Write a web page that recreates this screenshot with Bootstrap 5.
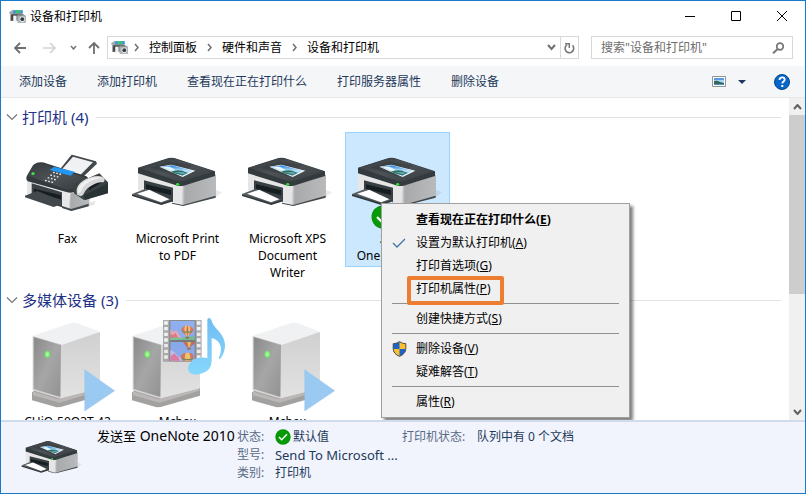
<!DOCTYPE html>
<html lang="zh-CN">
<head>
<meta charset="utf-8">
<meta name="viewport" content="width=device-width, initial-scale=1">
<title>设备和打印机</title>
<link href="https://cdn.jsdelivr.net/npm/bootstrap@5.3.0/dist/css/bootstrap.min.css" rel="stylesheet">
<style>
body{font:12px/17px "Noto Sans","Noto Sans CJK SC",sans-serif;color:#000;background:#fff}
svg{display:block;flex-shrink:0}
.btn{--bs-btn-font-size:12px;--bs-btn-line-height:17px;--bs-btn-padding-x:0;--bs-btn-padding-y:0;--bs-btn-border-width:0;--bs-btn-border-radius:0;--bs-btn-color:#000}
.win{border:1px solid #1979ca}
.titlebar{height:30px;padding-left:8px}
.titlebar h1{font-size:12px;line-height:17px}
.win-btn{width:46px;height:29px}
.addr-row{height:35px;padding:5px 12px 7px 13px}
.box{border:1px solid #d9d9d9}
.nav-recent{margin-left:14px}
.nav-up{margin-left:11px}
.crumbs{padding-left:3px;margin-left:7px}
.crumb-list{gap:9px;margin-left:5px}
.refresh{width:18px;border-left:1px solid #d9d9d9!important}
.search-box{width:202px;margin-left:12px;padding:0 7px 0 9px}
.search-box input{font-size:12px;line-height:17px;color:#6d6d6d;outline:0;min-width:0}
.search-box input::placeholder{color:#6d6d6d;opacity:1}
.cmdbar{height:32px;background:#f5f6f7;border-bottom:1px solid #e8e8e8;padding:0 15px 0 18px}
.cmds{gap:30px}
.cmds .btn{--bs-btn-color:#1e395b;--bs-btn-hover-color:#1e395b}
.content{min-height:0}
.pane{padding:3px 8px 0 5px}
.group-head{color:#1e3287;margin:5px 0 4px;gap:4px}
.group-head h2{font-size:15px;line-height:22px}
.group-rule{height:1px;background:#e2e2e2;margin-left:4px}
.tiles{gap:5px;padding-left:9px}
.tile{width:105px;padding-bottom:3px!important}
.tile svg{margin-bottom:2px}
.tile.picked{background:#cce8ff;outline:1px solid #99d1ff;outline-offset:-1px}
.default-mark{left:26px;top:73px}
.sbar{width:16px;background:#f0f0f0}
.sbar .btn{height:17px}
.thumb{height:62%;background:#cdcdcd}
.ctx{left:36px;top:71px;width:249px;background:#f0f0f0;border:1px solid #a0a0a0;padding:4px 2px;box-shadow:3px 3px 3px rgba(0,0,0,.5);z-index:5}
.ctx .btn{height:23px;padding-left:8px;gap:8px}
.ctx-ico{width:16px}
.ctx hr{margin:3px 8px;border-top:1px solid #919191;opacity:1}
.callout-frame{left:23px;top:-1px;width:97px;height:29px;border:4px solid #ed7d31;border-radius:2px;pointer-events:none}
.details{height:73px;background:#f1f4fc;border-top:2px solid #d0dceb;color:#1e395b;padding:2px 0 0 16px}
.details h3{font-size:14px;line-height:18px;color:#000;margin:3px 2px 0 10px}
.details h3 span{font-size:13px}
.latin{font-size:13px}
.props{display:grid;grid-template-columns:38px 127px;line-height:18px;margin:4px 0 0}
.props.wide{grid-template-columns:75px auto}
.props dt{font-weight:400;color:#5a6b86}
.state{gap:2px}
</style>
<script src="https://cdn.jsdelivr.net/npm/bootstrap@5.3.0/dist/js/bootstrap.bundle.min.js"></script>
</head>
<body>
<svg width="0" height="0" class="position-absolute" aria-hidden="true">
<defs>
<linearGradient id="gTop" x1="0" y1="0" x2="1" y2="1"><stop offset="0" stop-color="#353b3e"/><stop offset=".5" stop-color="#4c5255"/><stop offset="1" stop-color="#353b3e"/></linearGradient>
<linearGradient id="gSide" x1="0" y1="0" x2="1" y2="0"><stop offset="0" stop-color="#f1f1f1"/><stop offset=".12" stop-color="#a8a9ab"/><stop offset="1" stop-color="#b9babc"/></linearGradient>
<linearGradient id="gSky" x1="0" y1="0" x2="0" y2="1"><stop offset="0" stop-color="#1f7fe0"/><stop offset=".55" stop-color="#c4e8fa"/><stop offset="1" stop-color="#3f8fc8"/></linearGradient>
<linearGradient id="gFront" x1="0" y1="0" x2="1" y2="1"><stop offset="0" stop-color="#898989"/><stop offset=".5" stop-color="#a6a6a6"/><stop offset="1" stop-color="#929292"/></linearGradient>
<linearGradient id="gWhite" x1="0" y1="0" x2="0" y2="1"><stop offset="0" stop-color="#d0d0d0"/><stop offset="1" stop-color="#e2e2e2"/></linearGradient>
<linearGradient id="gNote" x1="0" y1="0" x2="0" y2="1"><stop offset="0" stop-color="#6fbdf2"/><stop offset="1" stop-color="#86d7fc"/></linearGradient>
<radialGradient id="gLed"><stop offset="0" stop-color="#c5ffb5"/><stop offset="1" stop-color="#62dd5d"/></radialGradient>
</defs>
<symbol id="printer" viewBox="375 6 315 288">
<path d="M552 226l96-25 18-14-20-8z" fill="#888" opacity=".18"/>
<path d="M414 126v54l18 8 112 36 8 3 96-28V132z" fill="#e6e6e7"/>
<path d="M549 165q50-10 99-31v65l-96 28-10-3z" fill="url(#gSide)"/>
<path d="M516 218l33 7 98-28v6l-98 25-33-7z" fill="#42484b"/>
<path d="M432 151l87 22v43l-87-29z" fill="#394044"/>
<path d="M438 163l75 18v14l-75-18z" fill="#171e22"/>
<path d="M396 192l41-16 78 33-31 14z" fill="#555b5e"/>
<path d="M396 192l88 28 31-11v6l-31 10-88-27z" fill="#30383c"/>
<path d="M411 191l37-12 60 29-25 9z" fill="#fff"/>
<path d="M414 113l92-29q9-2 17 0l122 40v14l-94 29q-9 2-18 0l-119-37z" fill="#343b3e"/>
<path d="M417 113l91-28q7-1 13 0l121 39-92 29q-9 2-17 0z" fill="url(#gTop)"/>
<path d="M452 113l57-18 70 10-47 34z" fill="#2c3336" opacity=".4"/>
<path d="M478 110l36-6 72 18-38 19z" fill="#f5f8fa"/>
<path d="M485 111l30-5 63 16-31 15z" fill="url(#gSky)"/>
<path d="M488 112q20-6 28 2 8 4 12 7-10 3-17 0z" fill="#e9f7fe"/>
<path d="M512 125q22-7 35-3l16 7-16 7-20-5z" fill="#2c7263"/>
<path d="M523 127l26-1 9 4-10 3z" fill="#66a4b6"/>
<ellipse cx="533" cy="163" rx="5" ry="4" fill="#35dd35"/>
</symbol>
<symbol id="fax" viewBox="45 6 315 288">
<path d="M212 243l70-18 5-12-25 5z" fill="#888" opacity=".2"/>
<path d="M81 145v48l105 39 28 10 51-15 8-37-88-18z" fill="#e7e7e8"/>
<path d="M212 190l56-10v46l-53 16-10-4z" fill="url(#gSide)"/>
<path d="M95 160l91 27v45l-91-31z" fill="#3b4145"/>
<path d="M102 176l81 20v12l-81-19z" fill="#171d20"/>
<path d="M75 197l36-14 73 28v12l-23 8-86-29z" fill="#42484b"/>
<path d="M186 228l28 9 52-16v8l-52 14-28-9z" fill="#42484b"/>
<path d="M178 120l36-45q2-1 5 0l69 19 3 7-49 47z" fill="#42484b"/>
<path d="M184 120l35-40 60 17-38 38z" fill="#eff1f2"/>
<path d="M80 139l19-33q4-5 12-8 15-3 31 3l117 38q10 7 6 14l-43 33q-10 4-20 1l-119-33q-6-5-3-15z" fill="#343b3e"/>
<path d="M84 137l18-30q8-7 25-5l132 42q3 5-4 9l-40 24q-10 4-20 0z" fill="url(#gTop)"/>
<path d="M149 120l13-10 62 15-12 12z" fill="#2196f3"/>
<g stroke="#eee" stroke-width="4" stroke-dasharray="5 5"><path d="M159 127l27 7M151 135l27 7M143 143l27 7M135 151l27 7"/></g>
<ellipse cx="99" cy="131" rx="5" ry="4" fill="#43e843"/>
<path d="M219 174q1-11 14-16l65-28 26 27v31l-72 22-30-20z" fill="#3a4144"/>
<path d="M253 196l71-36v30l-69 20z" fill="#293235"/>
<path d="M265 164l37-20 5 12-40 25z" fill="#151d20"/>
<path d="M231 194q-5-19 9-34 14-15 43-21 19-4 29 4 5 7-2 14-15-2-25 4-24 11-31 25-3 10-12 13z" fill="#d6d7d8"/>
<path d="M235 190q-5-17 8-28 19-17 43-20 17-2 20 3-23 1-39 12-17 9-22 23-2 9-10 10z" fill="#f0f0f0"/>
</symbol>
<symbol id="nas" viewBox="45 75 315 288">
<path d="M96 307l14-9 190-6v25l-118 34-12 1-74-21z" fill="#a3a1a0"/>
<path d="M99 304l77 24 122-36v10l-119 36-80-22z" fill="#bab7b6"/>
<path d="M98 139l110-38q10-4 20-2l66 24q6 2 6 7v164l-118 31-84-25z" fill="#ededee"/>
<path d="M185 165l115-39v168l-118 31z" fill="url(#gWhite)"/>
<path d="M98 138l110-37q10-4 20-2l70 25-114 40z" fill="#f0f1f2"/>
<path d="M98 138l88 26-4 162-84-25z" fill="#d4d4d4"/>
<path d="M101 141l82 24-2 156-80-24z" fill="url(#gFront)"/>
<ellipse cx="142" cy="193" rx="9" ry="11" fill="url(#gLed)"/>
</symbol>
<symbol id="play" viewBox="45 75 315 288">
<path d="M254 239l90 63-90 61z" fill="#9acaf2" stroke="#8abce6"/>
</symbol>
<symbol id="balloon" viewBox="0 0 40 42">
<path d="M13 29Q1 17 2 12 6 1 20 1q14 0 18 11 1 6-11 17z" fill="#d4614f"/>
<path d="M17 31Q7 13 14 1q6-1 12 0 7 12-3 30z" fill="#f2c15b"/><path d="M19 31q-4-17 0-30h3q3 13-1 30z" fill="#c8503f"/>
<path d="M3 15q17 7 34 0l-3 6q-14 5-28 0z" fill="#6c7b43"/><path d="M15 34h10v6H15z" fill="#93622f"/>
</symbol>
<symbol id="smallDev" viewBox="0 0 16 14">
<path d="M3 1h10v3H3z" fill="#3291e4"/><path d="M6 1h5v3H6z" fill="#3fc276"/>
<path d="M1 4h11l3 2v5H1z" fill="#777d81"/><path d="M0 3l3-2h2L3 4v7H1V5z" fill="#a7abad"/>
<path d="M3 6h4v6H3z" fill="#f2f2f2"/><path d="M2 5h6v1H4v5H2z" fill="#444"/>
<path d="M8 6h8v7H8z" fill="#acb2b6"/><path d="M9 5h3v1H9z" fill="#777"/>
<circle cx="12.5" cy="9.500" r="2.600" fill="#eee"/><circle cx="12.500" cy="9.500" r="1.800" fill="#343b40"/>
</symbol>
<symbol id="sep" viewBox="0 0 7 9"><path d="M2 1l3 3.500L2 8" fill="none" stroke="#707070" stroke-width="1.500"/></symbol>
<symbol id="okay" viewBox="0 0 24 24"><circle cx="12" cy="12" r="11.500" fill="#0b8f0b"/><circle cx="12" cy="12" r="10.500" fill="#069b06"/><path d="M6 12l4 4 8-8" fill="none" stroke="#fff" stroke-width="2.200"/></symbol>
<symbol id="groupChev" viewBox="0 0 12 12"><path d="M1 3.500l5 5 5-5" fill="none" stroke="#777" stroke-width="1.200"/></symbol>
</svg>

<div class="win vh-100 d-flex flex-column overflow-hidden">
<header class="titlebar d-flex align-items-center flex-shrink-0">
  <svg width="17" height="15"><use href="#smallDev"/></svg>
  <h1 class="m-0 ms-1 fw-normal flex-grow-1">设备和打印机</h1>
  <button class="btn win-btn d-flex align-items-center justify-content-center" aria-label="最小化"><svg width="10" height="10"><path d="M0 5.500h10" stroke="#000"/></svg></button>
  <button class="btn win-btn d-flex align-items-center justify-content-center" aria-label="最大化"><svg width="10" height="10"><path d="M.5.5h9v9h-9z" fill="none" stroke="#000"/></svg></button>
  <button class="btn win-btn d-flex align-items-center justify-content-center" aria-label="关闭"><svg width="10" height="10"><path d="M0 0l10 10M10 0L0 10" stroke="#000"/></svg></button>
</header>

<div class="addr-row d-flex align-items-stretch flex-shrink-0">
  <nav class="d-flex align-items-center" aria-label="导航">
    <button class="btn" aria-label="后退"><svg width="12" height="12"><path d="M12 6H1.500M6 1L1 6l5 5" fill="none" stroke="#6f6f6f" stroke-width="1.800"/></svg></button>
    <button class="btn ms-3" aria-label="前进"><svg width="14" height="12"><path d="M1 6h11M8 1l5 5-5 5" fill="none" stroke="#d3d3d3" stroke-width="1.600"/></svg></button>
    <button class="btn nav-recent" aria-label="最近位置"><svg width="7" height="6"><path d="M1 1l2.500 3L6 1" fill="none" stroke="#777" stroke-width="1.500"/></svg></button>
    <button class="btn nav-up" aria-label="向上"><svg width="12" height="12"><path d="M6 12V1.500M1 6l5-5 5 5" fill="none" stroke="#6f6f6f" stroke-width="1.800"/></svg></button>
  </nav>
  <div class="box crumbs d-flex align-items-center flex-grow-1">
    <svg width="17" height="15"><use href="#smallDev"/></svg>
    <nav class="crumb-list d-flex align-items-center flex-grow-1" aria-label="地址">
      <svg width="7" height="9"><use href="#sep"/></svg><a href="#" class="text-black text-decoration-none">控制面板</a>
      <svg width="7" height="9"><use href="#sep"/></svg><a href="#" class="text-black text-decoration-none">硬件和声音</a>
      <svg width="7" height="9"><use href="#sep"/></svg><a href="#" class="text-black text-decoration-none">设备和打印机</a>
    </nav>
    <button class="btn me-1" aria-label="展开地址"><svg width="9" height="7"><path d="M1 1l3.500 4L8 1" fill="none" stroke="#707070" stroke-width="2"/></svg></button>
    <button class="btn refresh align-self-stretch d-flex align-items-center justify-content-center" aria-label="刷新"><svg width="11" height="12"><path d="M3 2.800a4.300 4.300 0 1 0 5.500.6" fill="none" stroke="#777" stroke-width="1.600"/><path d="M1 1.700h4.300V6" fill="none" stroke="#777" stroke-width="1.500"/></svg></button>
  </div>
  <form class="box search-box d-flex align-items-center">
    <input class="border-0 p-0 flex-grow-1 bg-transparent" type="search" aria-label="搜索" placeholder='搜索"设备和打印机"'>
    <button type="button" class="btn" aria-label="搜索"><svg width="13" height="12"><circle cx="8" cy="4.500" r="3.300" fill="none" stroke="#777" stroke-width="1.700"/><path d="M5.700 7L1 11.300" stroke="#777" stroke-width="2"/></svg></button>
  </form>
</div>

<div class="cmdbar d-flex align-items-center justify-content-between flex-shrink-0">
  <div class="cmds d-flex">
    <button class="btn">添加设备</button><button class="btn">添加打印机</button><button class="btn">查看现在正在打印什么</button><button class="btn">打印服务器属性</button><button class="btn">删除设备</button>
  </div>
  <div class="d-flex align-items-center">
    <button class="btn" aria-label="更改视图"><svg width="14" height="11"><path d="M.5.5h13v10H.5z" fill="#fff" stroke="#8e9499"/><path d="M2 2h10v7H2z" fill="#a9d8f5"/><path d="M2 2h10v2H2z" fill="#5b98e4"/><path d="M2 5q4-1 6 1l4 1v1H2z" fill="#35665c"/><path d="M2 8h10v1H2z" fill="#4d8fc5"/></svg></button>
    <button class="btn ps-2 ms-1" aria-label="更多视图选项"><svg width="8" height="4"><path d="M0 0h8L4 4z" fill="#1e395b"/></svg></button>
    <button class="btn ps-4 ms-1" aria-label="帮助"><svg width="16" height="16"><circle cx="8" cy="8" r="7.500" fill="#0865ca" stroke="#064987"/><path d="M5.500 6q0-2.700 2.700-2.700 2.500 0 2.500 2.200 0 1.300-1.500 2.200-.9.600-.9 1.700" fill="none" stroke="#fff" stroke-width="1.800"/><path d="M7.300 11h2v2h-2z" fill="#fff"/></svg></button>
  </div>
</div>

<main class="content d-flex flex-grow-1 overflow-hidden">
  <div class="pane flex-grow-1">
    <section>
      <div class="group-head d-flex align-items-center"><svg width="12" height="12"><use href="#groupChev"/></svg><h2 class="m-0 fw-normal">打印机 (4)</h2><span class="group-rule flex-grow-1"></span></div>
      <div class="tiles d-flex align-items-start">
        <button class="btn tile"><svg width="105" height="96"><use href="#fax"/></svg>Fax</button>
        <button class="btn tile"><svg width="105" height="96"><use href="#printer"/></svg>Microsoft Print<br>to PDF</button>
        <button class="btn tile"><svg width="105" height="96"><use href="#printer"/></svg>Microsoft XPS<br>Document<br>Writer</button>
        <div class="position-relative">
          <button class="btn tile picked"><svg width="105" height="96"><use href="#printer"/></svg>发送至<br>OneNote 2010</button>
          <svg class="default-mark position-absolute" width="24" height="24"><use href="#okay"/></svg>
          <div class="ctx position-absolute text-start" role="menu">
            <button class="btn w-100 d-flex align-items-center fw-bold" role="menuitem"><span class="ctx-ico"></span><span>查看现在正在打印什么(<u>E</u>)</span></button>
            <button class="btn w-100 d-flex align-items-center" role="menuitem"><span class="ctx-ico"><svg width="14" height="12"><path d="M1 6l4 4 8-8" fill="none" stroke="#3f74aa" stroke-width="1.300"/></svg></span><span>设置为默认打印机(<u>A</u>)</span></button>
            <button class="btn w-100 d-flex align-items-center" role="menuitem"><span class="ctx-ico"></span><span>打印首选项(<u>G</u>)</span></button>
            <div class="position-relative"><button class="btn w-100 d-flex align-items-center" role="menuitem"><span class="ctx-ico"></span><span>打印机属性(<u>P</u>)</span></button><span class="callout-frame position-absolute"></span></div>
            <hr>
            <button class="btn w-100 d-flex align-items-center" role="menuitem"><span class="ctx-ico"></span><span>创建快捷方式(<u>S</u>)</span></button>
            <hr>
            <button class="btn w-100 d-flex align-items-center" role="menuitem"><span class="ctx-ico"><svg width="15" height="16"><path d="M7.500.5q3 2 6.500 2v5q0 5-6.500 8Q1 12.500 1 7.500v-5q3.500 0 6.500-2z" fill="#1b63c5"/><path d="M7.500.5q3 2 6.500 2V8H7.500zM1 8h6.500v7.500Q2 13 1 8z" fill="#fbbd31"/><path d="M7.500.7q3 2 6.300 2v5q0 5-6.300 7.700Q1.200 12.700 1.200 7.700v-5q3.300 0 6.300-2z" fill="none" stroke="#555" stroke-width="1"/></svg></span><span>删除设备(<u>V</u>)</span></button>
            <button class="btn w-100 d-flex align-items-center" role="menuitem"><span class="ctx-ico"></span><span>疑难解答(<u>T</u>)</span></button>
            <hr>
            <button class="btn w-100 d-flex align-items-center" role="menuitem"><span class="ctx-ico"></span><span>属性(<u>R</u>)</span></button>
          </div>
        </div>
      </div>
    </section>
    <section>
      <div class="group-head d-flex align-items-center"><svg width="12" height="12"><use href="#groupChev"/></svg><h2 class="m-0 fw-normal">多媒体设备 (3)</h2><span class="group-rule flex-grow-1"></span></div>
      <div class="tiles d-flex align-items-start">
        <button class="btn tile"><svg width="105" height="96"><use href="#nas"/><use href="#play"/></svg>CHiQ-50Q3T-42</button>
        <button class="btn tile"><svg width="105" height="96" viewBox="375 75 315 288">
          <use href="#nas" x="345" y="75" width="315" height="288"/>
          <g opacity=".85">
          <path d="M489 90h116v125H489z" fill="#a0a0a0"/><path d="M508 91h79v123h-79z" fill="#6a6a6a"/>
          <path d="M511 93h73v57h-73zM511 156h73v56h-73z" fill="#7da3ee"/>
          <path d="M511 118l10 8 8-6 12 20 14 10h-44z" fill="#e39aae"/><path d="M511 132l9 4 7-8 8 18 8 4h-32z" fill="#d9656a"/>
          <path d="M511 145q20-6 34 0 18-8 39-6v11h-73z" fill="#67b889"/>
          <path d="M511 180q14 4 24 20l49 6v6h-73z" fill="#b9b7ea"/><path d="M511 200l12-10 15 16v6h-27z" fill="#db6d98"/>
          <use href="#balloon" x="542" y="106" width="40" height="42"/>
          <path d="M549 156h36v4l-15 12h-10z" fill="#c05c4c"/><path d="M562 156h11l-4 16h-4z" fill="#e6bd54"/><path d="M562 173h10v6h-10z" fill="#93622f"/>
          <path d="M549 212q-10-9-6-16 7-9 20-8 16 0 18 10 1 7-6 14z" fill="#d4614f"/><path d="M556 212q-4-14 2-24h9q7 13 3 24z" fill="#f2c15b"/><path d="M545 204q17 6 35 0v4q-17 6-34 0z" fill="#6c7b43"/>
          <path d="M498 94v119M596 94v119" stroke="#f1f1f1" stroke-width="11" stroke-dasharray="10 7"/>
          </g>
          <path d="M622 90q0-6 5-6 6 0 8 8 3 13 20 30 19 20 20 44 0 21-13 39-5 5-6-1 9-18 6-36-4-17-27-24v68q0 28-28 38-26 10-40-3-9-18 9-34 18-14 46-9z" fill="url(#gNote)"/>
        </svg>Mcbox</button>
        <button class="btn tile"><svg width="105" height="96"><use href="#nas"/><use href="#play"/></svg>Mcbox</button>
      </div>
    </section>
  </div>
  <div class="sbar d-flex flex-column flex-shrink-0" role="scrollbar" aria-controls="details" aria-valuenow="0">
    <button class="btn d-flex align-items-center justify-content-center" aria-label="向上滚动"><svg width="9" height="6"><path d="M1 5l3.500-4L8 5" fill="none" stroke="#606060" stroke-width="2"/></svg></button>
    <div class="flex-grow-1"><div class="thumb"></div></div>
    <button class="btn d-flex align-items-center justify-content-center" aria-label="向下滚动"><svg width="9" height="6"><path d="M1 1l3.500 4L8 1" fill="none" stroke="#606060" stroke-width="2"/></svg></button>
  </div>
</main>

<footer id="details" class="details d-flex align-items-start flex-shrink-0">
  <svg width="70" height="64"><use href="#printer"/></svg>
  <h3 class="fw-normal text-nowrap"><span>发送至</span> OneNote 2010</h3>
  <dl class="props">
    <dt>状态:</dt><dd class="state m-0 d-flex align-items-center"><svg width="16" height="16"><use href="#okay"/></svg>默认值</dd>
    <dt>型号:</dt><dd class="latin m-0 text-nowrap">Send To Microsoft ...</dd>
    <dt>类别:</dt><dd class="m-0">打印机</dd>
  </dl>
  <dl class="props wide"><dt>打印机状态:</dt><dd class="m-0">队列中有 0 个文档</dd></dl>
</footer>
</div>
</body>
</html>
